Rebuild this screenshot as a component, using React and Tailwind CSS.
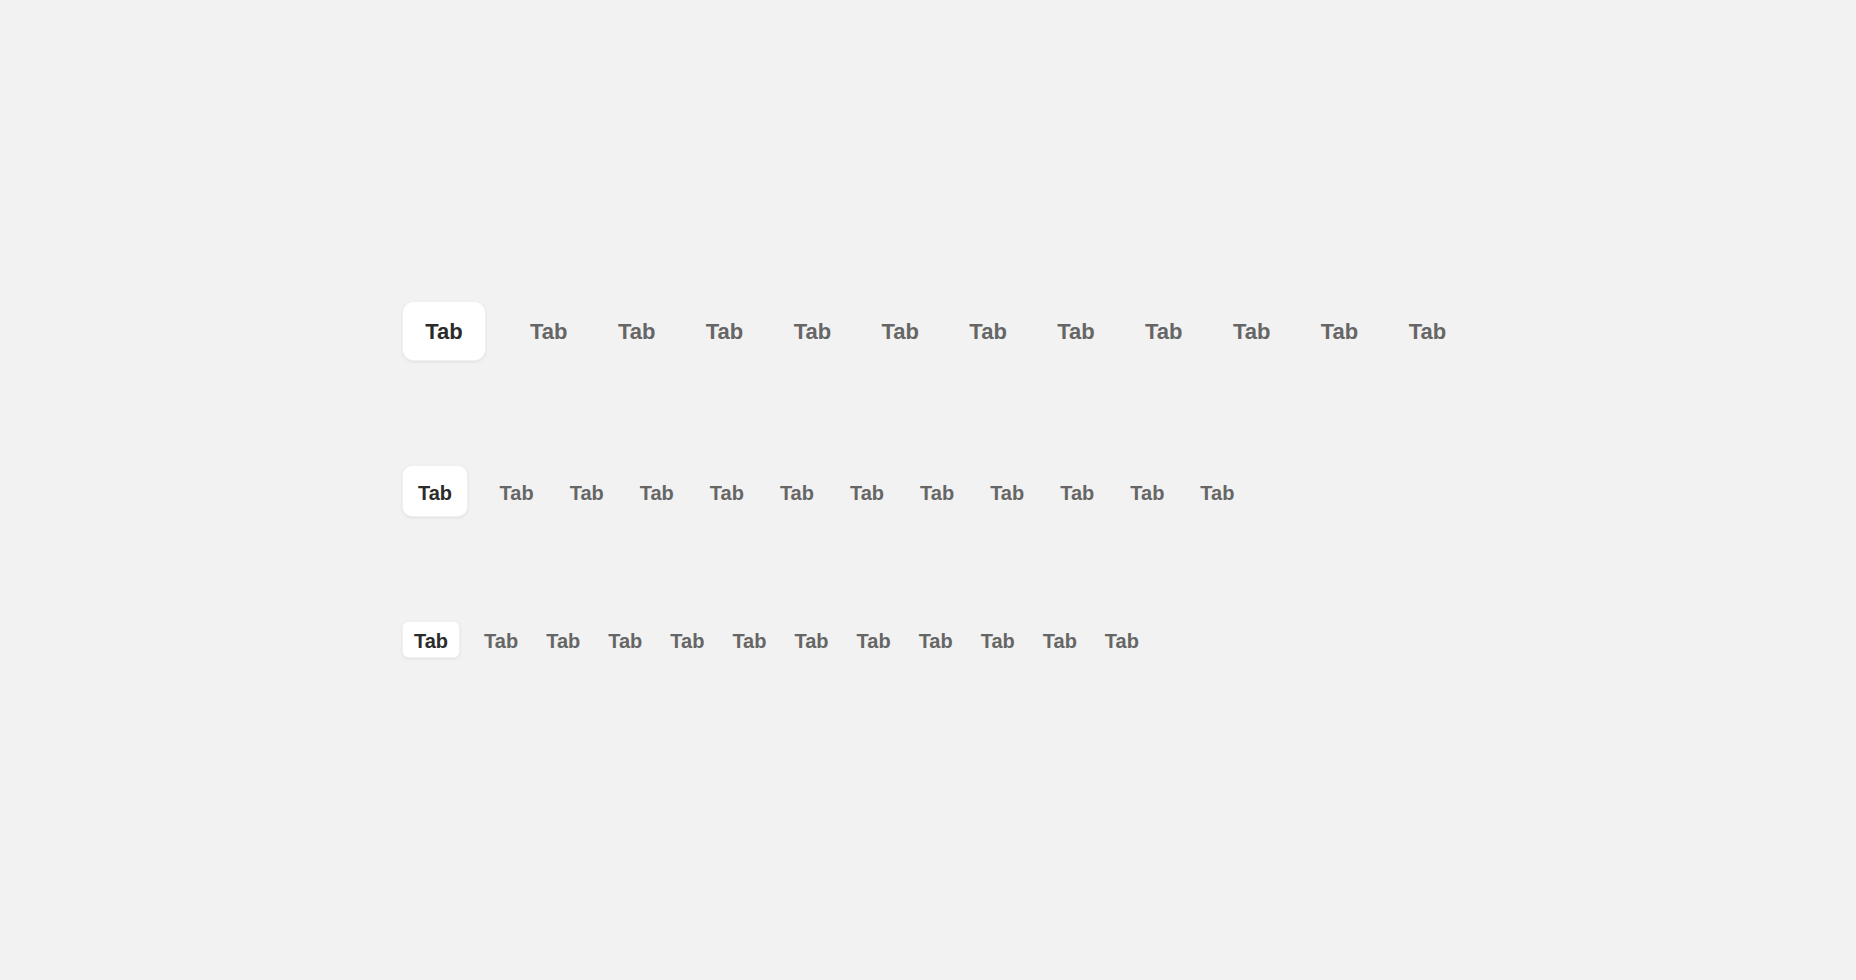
import React from "react";

const rows = [
  {
    h: "h-[60px]",
    px: "px-[22.2px]",
    text: "text-[22px] pt-[2px]",
    radius: "rounded-[12px]",
    extra: "ml-[17px]",
  },
  {
    h: "h-[52px]",
    px: "px-[15px]",
    text: "text-[20px] pt-[3px]",
    radius: "rounded-[10px]",
    extra: "ml-[11.5px]",
  },
  {
    h: "h-[37px]",
    px: "px-[11px]",
    text: "text-[20px] pt-[2px]",
    radius: "rounded-[6px]",
    extra: "ml-[8px]",
  },
];

function Row({ r }) {
  const tabs = Array.from({ length: 12 });
  return (
    <div className="flex items-center gap-[4px]">
      {tabs.map((_, i) => (
        <div
          key={i}
          className={
            i === 0
              ? `${r.h} ${r.px} ${r.radius} flex items-center bg-white text-[#2b2b2b] border border-black/[0.06] shadow-[0_1px_3px_rgba(0,0,0,0.08)]`
              : i === 1
              ? `${r.h} ${r.px} ${r.extra} flex items-center text-[#666666] border border-transparent`
              : `${r.h} ${r.px} flex items-center text-[#666666] border border-transparent`
          }
        >
          <span className={`${r.text} font-bold leading-none`}>Tab</span>
        </div>
      ))}
    </div>
  );
}

export default function App() {
  return (
    <div
      className="w-full min-h-[980px] bg-[#f2f2f2] pt-[301px] pl-[402px] flex flex-col gap-[104px]"
      style={{ fontFamily: "'Liberation Sans', Arial, sans-serif" }}
    >
      {rows.map((r, i) => (
        <Row key={i} r={r} />
      ))}
    </div>
  );
}
